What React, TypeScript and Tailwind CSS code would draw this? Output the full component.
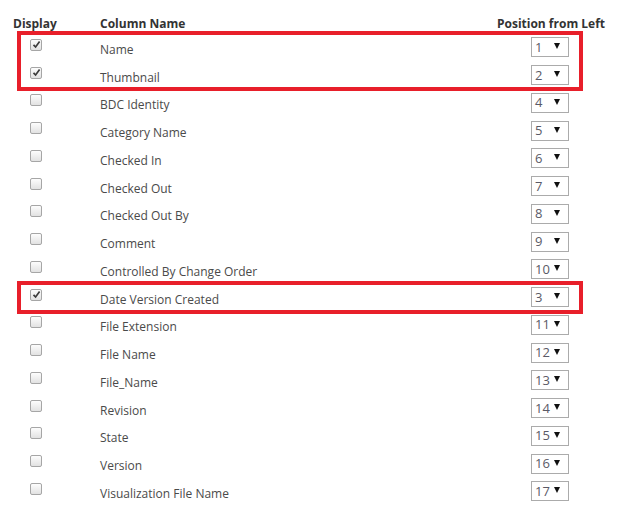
import React from "react";

const rows = [
  { name: "Name", checked: true, pos: 1 },
  { name: "Thumbnail", checked: true, pos: 2 },
  { name: "BDC Identity", checked: false, pos: 4 },
  { name: "Category Name", checked: false, pos: 5 },
  { name: "Checked In", checked: false, pos: 6 },
  { name: "Checked Out", checked: false, pos: 7 },
  { name: "Checked Out By", checked: false, pos: 8 },
  { name: "Comment", checked: false, pos: 9 },
  { name: "Controlled By Change Order", checked: false, pos: 10 },
  { name: "Date Version Created", checked: true, pos: 3 },
  { name: "File Extension", checked: false, pos: 11 },
  { name: "File Name", checked: false, pos: 12 },
  { name: "File_Name", checked: false, pos: 13 },
  { name: "Revision", checked: false, pos: 14 },
  { name: "State", checked: false, pos: 15 },
  { name: "Version", checked: false, pos: 16 },
  { name: "Visualization File Name", checked: false, pos: 17 },
];

const Checkbox = ({ checked }: { checked: boolean }) => (
  <div className="w-[12px] h-[12px] mb-[8px] rounded-[2px] border border-[#a6a6a6] bg-gradient-to-b from-[#fdfdfd] to-[#e2e2e2] flex items-center justify-center">
    {checked && (
      <svg width="9" height="9" viewBox="0 0 9 9">
        <path d="M1.5 4.8 L3.6 7 L7.6 1.6" stroke="#3c3c3c" strokeWidth="1.7" fill="none" />
      </svg>
    )}
  </div>
);

const PosSelect = ({ value }: { value: number }) => (
  <div className="w-[38px] h-[20px] mb-[3px] border border-[#ababab] bg-white flex items-center justify-between pl-[3px] pr-[8px]">
    <span className="text-[13px] leading-none text-[#5a5a66]">{value}</span>
    <svg width="6" height="6" viewBox="0 0 6 6" className="mb-[2px]">
      <path d="M0 0 H6 L3 6 Z" fill="#111" />
    </svg>
  </div>
);

export default function App() {
  return (
    <div
      className="relative w-[620px] h-[515px] bg-white overflow-hidden"
      style={{ fontFamily: '"Open Sans", "Noto Sans", Arial, sans-serif' }}
    >
      {/* Header */}
      <div className="flex h-[35px] pt-[15px] text-[12px] leading-[18px] font-bold text-[#333]">
        <div className="w-[72px] pl-[13px]">Display</div>
        <div className="flex-1 pl-[28px]">Column Name</div>
        <div className="w-[127px] pr-[15px] text-right">Position from Left</div>
      </div>

      {/* Rows */}
      {rows.map((r) => (
        <div key={r.name} className="flex items-center h-[27.75px] text-[12px] text-[#4a4a4a]">
          <div className="w-[72px] pl-[30px] flex items-center h-full">
            <Checkbox checked={r.checked} />
          </div>
          <div className="flex-1 pl-[28px] pt-[2px]">{r.name}</div>
          <div className="w-[89px] flex items-center h-full">
            <PosSelect value={r.pos} />
          </div>
        </div>
      ))}

      {/* Red highlight annotations */}
      <div className="absolute left-[17px] top-[31px] w-[566px] h-[60px] border-[4px] border-[#e81f2a]" />
      <div className="absolute left-[17px] top-[281px] w-[566px] h-[33px] border-[4px] border-[#e81f2a]" />
    </div>
  );
}
